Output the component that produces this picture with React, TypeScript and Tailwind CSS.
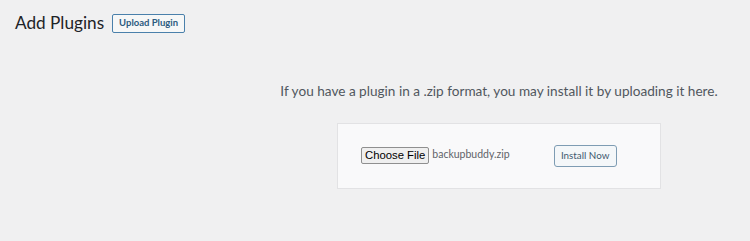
const App = () => {
  return (
    <div className="w-[750px] h-[241px] bg-[#f0f0f1] overflow-hidden font-['Lato',sans-serif] text-[#3c434a]">
      {/* Page header */}
      <div className="flex items-center pl-[15px] pt-[12px]">
        <h1 className="text-[17.2px] leading-[22px] font-normal text-[#1d2327]">Add Plugins</h1>
        <button className="ml-[8px] h-[19px] px-[6px] border border-[#4a80ab] rounded-[2px] bg-[#f6f7f7] text-[#2c5b80] text-[9.5px] font-bold leading-none">
          Upload Plugin
        </button>
      </div>

      {/* Upload area */}
      <div className="ml-[281px] w-[436px] mt-[47px] flex flex-col items-center">
        <p className="text-[13.6px] leading-[20px] whitespace-nowrap text-[#50575e]">
          If you have a plugin in a .zip format, you may install it by uploading it here.
        </p>
        <div className="mt-[22px] w-[324px] h-[66px] bg-[#f9f9fa] border border-[#e2e2e4] flex items-center pl-[23px]">
          <div className="flex items-center mt-[-2px]">
            <span className="h-[17px] px-[3px] flex items-center bg-[#efefef] border border-[#8f8f8f] rounded-[2px] text-[11.3px] text-black font-['Liberation_Sans',sans-serif]">
              Choose File
            </span>
            <span className="ml-[3px] text-[10.5px] text-[#5f6368]">backupbuddy.zip</span>
          </div>
          <button className="ml-[44px] h-[22px] w-[63px] border border-[#7e9cb3] rounded-[3px] bg-[#f4f7f9] text-[#3f5a70] text-[9.8px] leading-none">
            Install Now
          </button>
        </div>
      </div>
    </div>
  );
};

export default App;
